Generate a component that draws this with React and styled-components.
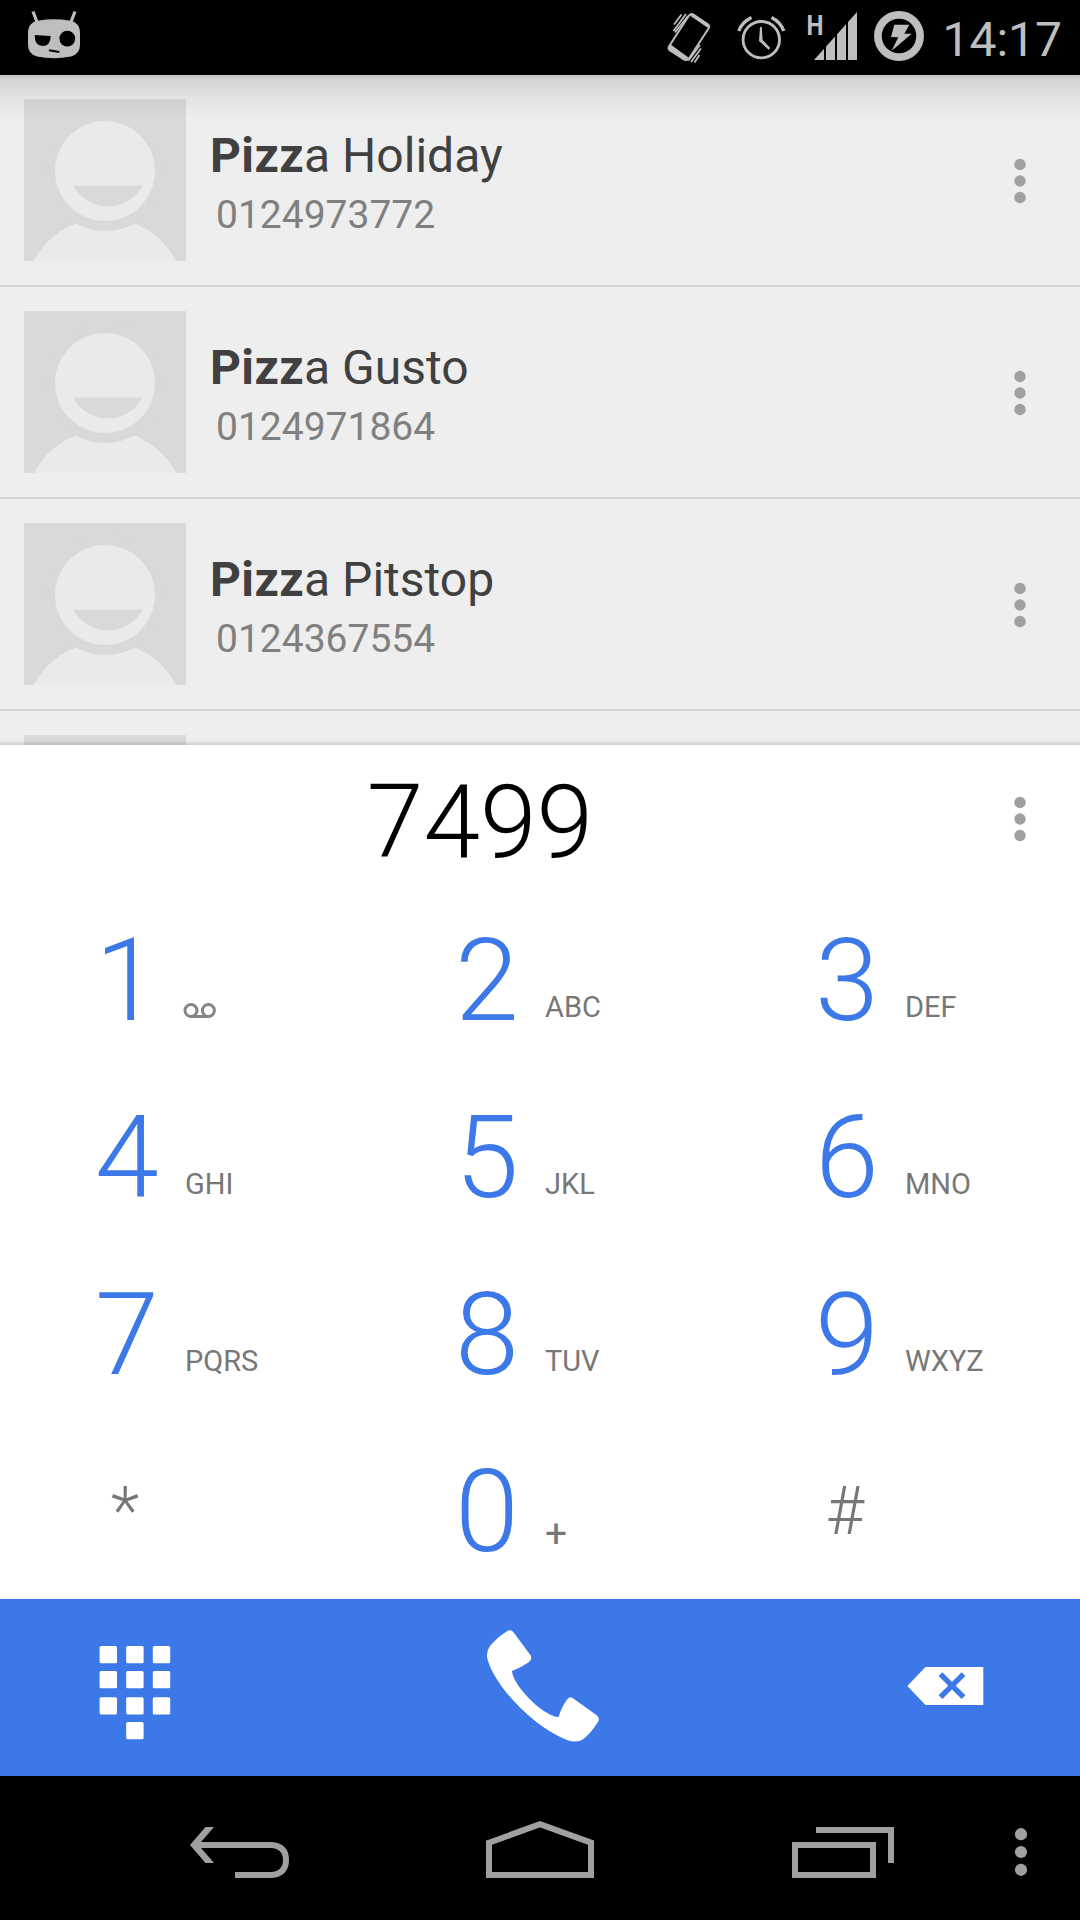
import React, { useState } from 'react'
import styled, { createGlobalStyle } from 'styled-components'

const contacts = [
    { id: 1, match: 'Pizz', rest: 'a Holiday', phone: '0124973772' },
    { id: 2, match: 'Pizz', rest: 'a Gusto', phone: '0124971864' },
    { id: 3, match: 'Pizz', rest: 'a Pitstop', phone: '0124367554' },
    { id: 4, match: '', rest: '', phone: '' },
]

const keys = [
    { digit: '1', voicemail: true },
    { digit: '2', letters: 'ABC' },
    { digit: '3', letters: 'DEF' },
    { digit: '4', letters: 'GHI' },
    { digit: '5', letters: 'JKL' },
    { digit: '6', letters: 'MNO' },
    { digit: '7', letters: 'PQRS' },
    { digit: '8', letters: 'TUV' },
    { digit: '9', letters: 'WXYZ' },
    { digit: '*', symbol: true },
    { digit: '0', letters: '+' },
    { digit: '#', symbol: true },
]

function RobotIcon() {
    return (
        <svg width="60" height="60" viewBox="0 0 60 60" fill="#bebebe">
            <path d="M9 3.500L13 14M51 3.500L47 14" stroke="#bebebe" strokeWidth="3.200" fill="none" />
            <path d="M4 25Q4 14 15 12.500Q30 10 45 12.500Q56 14 56 25V37Q56 46 47 48.500Q30 52 13 48.500Q4 46 4 37Z" />
            <path d="M10.700 27L26.700 28Q26.500 38 18.500 38Q10.500 38 10.700 27Z" fill="#000" />
            <circle cx="43.300" cy="30.600" r="7.900" fill="#000" />
            <path d="M25 42.200L35.300 44" stroke="#000" strokeWidth="1.900" />
        </svg>
    )
}

function VibrateIcon() {
    return (
        <svg width="46" height="54" viewBox="0 0 46 54" fill="none" stroke="#bebebe">
            <path d="M24 4.500Q26 2 28.500 3.500L42.500 13Q45.500 15 43.500 17.500L24 47.500Q22 50 19.500 48.500L5 39.500Q2.500 37.500 4.300 35Z" strokeWidth="2" />
            <path d="M5 33L23.500 46.500L21.500 49Q20 50.500 18 49L4.500 39.500Q2.500 37 5 33Z" fill="#bebebe" stroke="none" />
            <path d="M26 3.500L43.500 15.500" strokeWidth="3" />
            <path d="M9 13.500L16.500 3.500M8.500 20L21 3M10 21.500L23 5M23.500 49.500L35 34M26 51L36 37.500M29.500 51.500L34.500 44" strokeWidth="1.800" />
        </svg>
    )
}

function AlarmIcon() {
    return (
        <svg width="50" height="50" viewBox="0 0 50 50" fill="none" stroke="#bebebe">
            <circle cx="25.300" cy="29.700" r="18.200" strokeWidth="2.800" />
            <path d="M2.800 21Q6 12 15.500 7.500M47.800 21Q44.500 12 35.500 7.500" strokeWidth="3.400" />
            <path d="M24 17H25.800L26.600 30L34.300 38L32.600 39.700L23 31Z" fill="#bebebe" stroke="none" />
        </svg>
    )
}

function SignalIcon() {
    return (
        <svg width="52" height="54" viewBox="0 0 52 54" fill="#bebebe">
            <text x="0.500" y="27" fontFamily="Roboto, sans-serif" fontSize="28" fontWeight="700" textLength="17" lengthAdjust="spacingAndGlyphs">H</text>
            <path d="M8 52L51 4V52Z" />
            <path d="M19 0V54M30 0V54M41 0V54" stroke="#000" strokeWidth="2" />
        </svg>
    )
}

function BatteryIcon() {
    return (
        <svg width="50" height="50" viewBox="0 0 50 50" fill="#bebebe">
            <circle cx="25" cy="25" r="21.100" fill="none" stroke="#bebebe" strokeWidth="7.700" />
            <path d="M20.300 13.700H35.300L30.300 22.700H37.700L17.700 39.700L24.300 26.300L17 26Z" />
        </svg>
    )
}

function Avatar() {
    return (
        <AvatarBox viewBox="0 0 162 162">
            <rect width="162" height="162" fill="#d9d9d9" />
            <circle cx="81" cy="199" r="80.200" fill="#eaeaea" />
            <circle cx="81" cy="72" r="60" fill="#d9d9d9" />
            <circle cx="81" cy="72" r="50" fill="#eaeaea" />
            <path d="M49.300 86.500H118.500A39 39 0 0 1 49.300 86.500Z" fill="#d9d9d9" />
        </AvatarBox>
    )
}

function Dots({ r = 5.7, gap = 16.5, color = '#a0a0a0' }) {
    return (
        <svg width="14" height="50" viewBox="-7 -25 14 50" fill={color}>
            <circle cy={-gap} r={r} />
            <circle cy="0" r={r} />
            <circle cy={gap} r={r} />
        </svg>
    )
}

function VoicemailIcon() {
    return (
        <svg width="34" height="17" viewBox="0 0 34 17" fill="none" stroke="#858585" strokeWidth="3">
            <circle cx="8" cy="8.500" r="6" />
            <circle cx="25.400" cy="8.500" r="6" />
            <path d="M8 14.500H25.400" />
        </svg>
    )
}

function DialpadIcon() {
    const cells = [[0, 0], [1, 0], [2, 0], [0, 1], [1, 1], [2, 1], [0, 2], [1, 2], [2, 2], [1, 3]]
    const rows = [19, 44, 70.3, 95]
    return (
        <svg width="120" height="121" viewBox="0 0 120 121" fill="#fff">
            {cells.map(([c, r]) => (
                <rect key={`${c}-${r}`} x={24.6 + c * 26.6} y={rows[r]} width="17.400" height="17.300" rx="1.500" />
            ))}
        </svg>
    )
}

function PhoneIcon() {
    return (
        <svg width="120" height="121" viewBox="0 0 120 121" fill="#fff">
            <path d="M27 4.200Q30.500 1.800 33.300 5L50.700 28.500Q52.500 32 49 35Q42 40 32 44C32.500 57 61 88.500 78.500 90Q82 79 87.500 72Q90 69 93 71.200L117 88.500Q120.200 91.500 118 95Q111 106 103.500 112Q97 116.500 87 113C50 98 15 58 7.700 33Q5.500 25 10 19Q17 10.500 27 4.200Z" />
        </svg>
    )
}

function BackspaceIcon() {
    return (
        <svg width="120" height="121" viewBox="0 0 120 121">
            <path d="M22.300 59L40.500 40H98.300V78H40.500Z" fill="#fff" />
            <path d="M55.500 47.200L78.500 70.200M78.500 47.200L55.500 70.200" stroke="#3c78e7" strokeWidth="5.400" />
        </svg>
    )
}

function NavIcon({ children }) {
    return (
        <svg width="120" height="72" viewBox="0 0 120 72" fill="none" stroke="#a0a0a0" strokeWidth="6">
            {children}
        </svg>
    )
}

function App() {
    const [number] = useState('7499')

    return (
        <Phone>
            <GlobalStyle />
            <StatusBar>
                <RobotIcon />
                <StatusIcons>
                    <VibrateIcon />
                    <AlarmIcon />
                    <SignalIcon />
                    <BatteryIcon />
                    <Clock>14:17</Clock>
                </StatusIcons>
            </StatusBar>

            <ContactList>
                {contacts.map(contact => (
                    <ContactRow key={contact.id}>
                        <Avatar />
                        <ContactText>
                            <ContactName><b>{contact.match}</b>{contact.rest}</ContactName>
                            <ContactPhone>{contact.phone}</ContactPhone>
                        </ContactText>
                        <MenuButton><Dots /></MenuButton>
                    </ContactRow>
                ))}
            </ContactList>

            <Display>
                <DisplayNumber>{number}</DisplayNumber>
                <MenuButton><Dots /></MenuButton>
            </Display>

            <Keypad>
                {keys.map(key => (
                    <Key key={key.digit}>
                        <Digit $symbol={key.symbol}>{key.digit}</Digit>
                        {key.voicemail && <Voicemail><VoicemailIcon /></Voicemail>}
                        {key.letters && <Letters $plus={key.letters === '+'}>{key.letters}</Letters>}
                    </Key>
                ))}
            </Keypad>

            <ActionBar>
                <ActionButton><DialpadIcon /></ActionButton>
                <ActionButton $wide><PhoneIcon /></ActionButton>
                <ActionButton><BackspaceIcon /></ActionButton>
            </ActionBar>

            <NavBar>
                <NavButton>
                    <NavIcon>
                        <path d="M15 33H91Q106 34 106 48Q106 62 91 63H55" />
                        <path d="M10 33L25.500 15H34L18.500 33L34 51H25.500Z" fill="#a0a0a0" stroke="none" />
                    </NavIcon>
                </NavButton>
                <NavButton>
                    <NavIcon>
                        <path d="M9 30.700L60 12.200L111 30.700V63H9Z" />
                    </NavIcon>
                </NavButton>
                <NavButton>
                    <NavIcon>
                        <path d="M15 33H93V63H15Z" />
                        <path d="M36 18H111V51" />
                    </NavIcon>
                </NavButton>
                <NavMenu><Dots r={6.1} gap={17.8} /></NavMenu>
            </NavBar>
        </Phone>
    )
}

export default App;

const GlobalStyle = createGlobalStyle`
    body {
        margin: 0;
        background: #fff;
        font-family: Roboto, sans-serif;
    }
    svg {
        display: block;
        flex: none;
    }
`
const Phone = styled.div`
    display: flex;
    flex-direction: column;
    width: 1080px;
    height: 1920px;
    overflow: hidden;
`
const StatusBar = styled.header`
    display: flex;
    justify-content: space-between;
    height: 75px;
    box-sizing: border-box;
    padding: 8px 18px 0 24px;
    background: #000;
    color: #bebebe;
`
const StatusIcons = styled.div`
    display: flex;
    align-items: flex-start;
    > svg:nth-child(1) {
        margin: 3px 25px 0 0;
    }
    > svg:nth-child(2) {
        margin: 2px 20px 0 0;
    }
    > svg:nth-child(3) {
        margin-right: 16px;
    }
    > svg:nth-child(4) {
        margin: 3px 18px 0 0;
    }
`
const Clock = styled.span`
    font-size: 48px;
    line-height: 63px;
`
const ContactList = styled.section`
    position: relative;
    height: 670px;
    overflow: hidden;
    background: #eee;
    /* shadows cast by the status bar and by the dialer panel */
    &::before, &::after {
        content: '';
        position: absolute;
        left: 0;
        right: 0;
        z-index: 1;
    }
    &::before {
        top: 0;
        height: 43px;
        background: linear-gradient(rgba(0, 0, 0, .16) 3px, rgba(0, 0, 0, .12) 3px, rgba(0, 0, 0, .05) 20px, transparent);
    }
    &::after {
        bottom: 0;
        height: 4px;
        background: linear-gradient(rgba(0, 0, 0, .05) 2px, rgba(0, 0, 0, .11) 2px);
    }
`
const ContactRow = styled.div`
    display: flex;
    height: 212px;
    box-sizing: border-box;
    padding: 24px 0 0 24px;
    border-bottom: 2px solid #d5d5d5;
`
const AvatarBox = styled.svg`
    width: 162px;
    height: 162px;
`
const ContactText = styled.div`
    flex: 1;
    padding: 29px 0 0 24px;
`
const ContactName = styled.div`
    font-size: 48px;
    line-height: 56px;
    color: #404040;
    > b {
        letter-spacing: .4px;
    }
`
const ContactPhone = styled.div`
    margin: 7px 0 0 6px;
    font-size: 39px;
    line-height: 48px;
    color: #808080;
`
const MenuButton = styled.div`
    display: flex;
    justify-content: center;
    align-items: center;
    width: 120px;
    height: 164px;
`
const Display = styled.div`
    display: flex;
    align-items: center;
    height: 146px;
    box-sizing: border-box;
    padding-top: 2px;
    background: #fff;
`
const DisplayNumber = styled.div`
    flex: 1;
    padding-top: 6px;
    font-size: 102px;
    font-weight: 300;
    line-height: 138px;
    text-align: center;
    color: #000;
`
const Keypad = styled.div`
    display: grid;
    grid-template-columns: repeat(3, 360px);
    grid-auto-rows: 177px;
    background: #fff;
`
const Key = styled.div`
    display: flex;
    padding-left: 94px;
`
const Digit = styled.span`
    width: ${props => props.$symbol ? '62px' : '66px'};
    padding-top: 1px;
    text-align: center;
    font-size: ${props => props.$symbol ? '66px' : '115px'};
    font-weight: 300;
    line-height: 177px;
    color: ${props => props.$symbol ? '#777' : '#3c78e7'};
`
const Letters = styled.span`
    padding: ${props => props.$plus ? '24px' : '28px'} 0 0 25px;
    font-size: ${props => props.$plus ? '39px' : '29px'};
    line-height: 177px;
    color: #777;
`
const Voicemail = styled.span`
    padding: 111px 0 0 23px;
`
const ActionBar = styled.div`
    display: flex;
    align-items: center;
    height: 177px;
    background: #3c78e7;
`
const ActionButton = styled.div`
    display: flex;
    flex: ${props => props.$wide ? 2 : 1};
    justify-content: center;
`
const NavBar = styled.nav`
    display: flex;
    align-items: center;
    height: 144px;
    padding-left: 90px;
    background: #000;
`
const NavButton = styled.div`
    display: flex;
    justify-content: center;
    width: 300px;
`
const NavMenu = styled.div`
    padding: 8px 0 0 24px;
`
